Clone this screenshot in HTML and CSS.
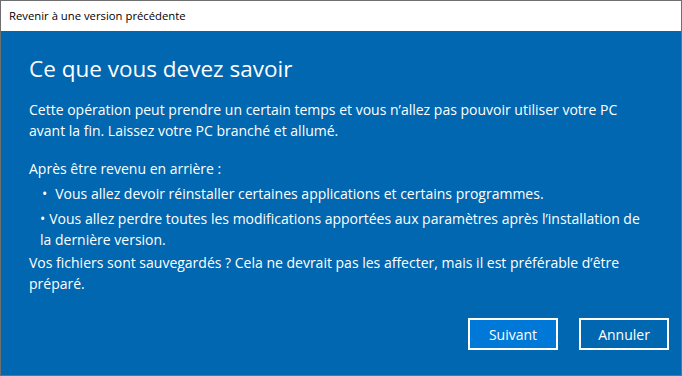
FILE: index.html
```html
<!DOCTYPE html>
<html lang="fr">
<head>
    <meta charset="UTF-8">
    <title>Revenir à une version précédente</title>
    <link rel="stylesheet" href="styles.css">
</head>
<body>
    <div class="window">
        <div class="titlebar">Revenir à une version précédente</div>
        <div class="content">
            <h1>Ce que vous devez savoir</h1>
            <p class="intro">Cette opération peut prendre un certain temps et vous n’allez pas pouvoir utiliser votre PC avant la fin. Laissez votre PC branché et allumé.</p>
            <p class="after">Après être revenu en arrière :</p>
            <ul class="list">
                <li class="first">Vous allez devoir réinstaller certaines applications et certains programmes.</li>
                <li>Vous allez perdre toutes les modifications apportées aux paramètres après l’installation de la dernière version.</li>
            </ul>
            <p class="files">Vos fichiers sont sauvegardés ? Cela ne devrait pas les affecter, mais il est préférable d’être préparé.</p>
            <div class="buttons">
                <button class="btn primary">Suivant</button>
                <button class="btn">Annuler</button>
            </div>
        </div>
    </div>
</body>
</html>
```

FILE: styles.css
```css
body {
    margin: 0;
    padding: 0;
    font-family: "Open Sans", "Noto Sans", sans-serif;
}
.window {
    width: 680px;
    height: 374px;
    border: 1px solid #6f6f6f;
    display: flex;
    flex-direction: column;
    background-color: #0067b0;
}
.titlebar {
    height: 30px;
    line-height: 30px;
    background-color: white;
    color: #000;
    font-size: 11.3px;
    padding-left: 8px;
}
.content {
    flex: 1;
    color: white;
    padding: 0 28px;
    display: flex;
    flex-direction: column;
}
h1 {
    font-weight: normal;
    font-size: 22.5px;
    margin: 22px 0 0 0;
    line-height: 32px;
}
p {
    margin: 0;
    font-size: 14px;
    line-height: 21px;
}
.intro {
    margin-top: 14px;
}
.after {
    margin-top: 17px;
}
.list {
    list-style: none;
    margin: 4px 0 0 0;
    padding: 0 0 0 11px;
    font-size: 14px;
    line-height: 21px;
}
.list li {
    margin-bottom: 3px;
}
.list li.first {
    padding-left: 2px;
    margin-bottom: 4px;
}
.list li::before {
    content: "•";
    margin-right: 4px;
}
.list li.first::before {
    margin-right: 8px;
}
.files {
    margin-top: -1px;
}
.buttons {
    margin-top: auto;
    margin-bottom: 25px;
    display: flex;
    justify-content: flex-end;
    gap: 21px;
    margin-right: -16px;
}
.btn {
    width: 90px;
    height: 32px;
    border: 2px solid white;
    background-color: transparent;
    color: white;
    font-family: inherit;
    font-size: 14px;
}
.btn.primary {
    background-color: #0078d7;
}
```
